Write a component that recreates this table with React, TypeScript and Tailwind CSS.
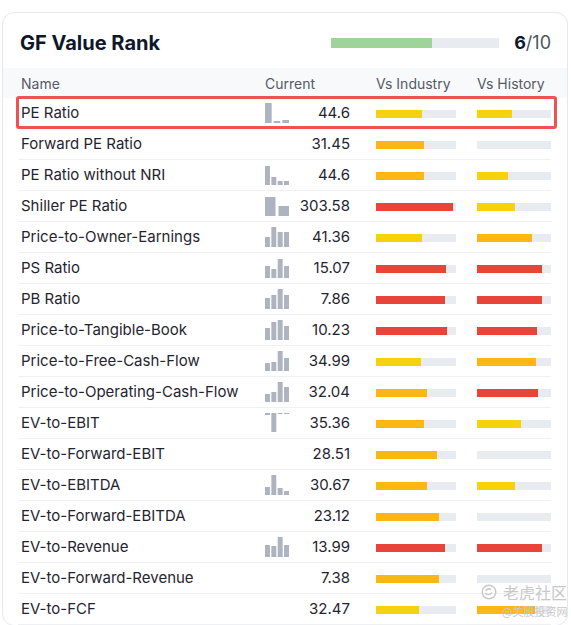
type Tone = "y" | "o" | "r";

interface MetricRow {
  name: string;
  value: string;
  chart: number[] | null;
  ind: [number, Tone];
  hist: [number, Tone];
}

const rows: MetricRow[] = [
  { name: "PE Ratio", value: "44.6", chart: [20, 2, 3], ind: [46, "y"], hist: [35, "y"] },
  { name: "Forward PE Ratio", value: "31.45", chart: null, ind: [48, "o"], hist: [0, "y"] },
  { name: "PE Ratio without NRI", value: "44.6", chart: [19, 8, 4, 4], ind: [48, "o"], hist: [31, "y"] },
  { name: "Shiller PE Ratio", value: "303.58", chart: [19, 10], ind: [77, "r"], hist: [38, "y"] },
  { name: "Price-to-Owner-Earnings", value: "41.36", chart: [10, 20, 15, 15], ind: [46, "y"], hist: [55, "o"] },
  { name: "PS Ratio", value: "15.07", chart: [12, 9, 19, 12], ind: [70, "r"], hist: [65, "r"] },
  { name: "PB Ratio", value: "7.86", chart: [11, 14, 20, 14], ind: [69, "r"], hist: [65, "r"] },
  { name: "Price-to-Tangible-Book", value: "10.23", chart: [12, 18, 20, 14], ind: [71, "r"], hist: [60, "r"] },
  { name: "Price-to-Free-Cash-Flow", value: "34.99", chart: [8, 9, 20, 13], ind: [45, "y"], hist: [59, "o"] },
  { name: "Price-to-Operating-Cash-Flow", value: "32.04", chart: [8, 10, 20, 15], ind: [51, "o"], hist: [61, "r"] },
  { name: "EV-to-EBIT", value: "35.36", chart: [-2, -19, -1, -1], ind: [48, "o"], hist: [44, "y"] },
  { name: "EV-to-Forward-EBIT", value: "28.51", chart: null, ind: [61, "o"], hist: [0, "y"] },
  { name: "EV-to-EBITDA", value: "30.67", chart: [8, 20, 7, 4], ind: [51, "o"], hist: [38, "y"] },
  { name: "EV-to-Forward-EBITDA", value: "23.12", chart: null, ind: [63, "o"], hist: [0, "y"] },
  { name: "EV-to-Revenue", value: "13.99", chart: [12, 11, 20, 12], ind: [69, "r"], hist: [65, "r"] },
  { name: "EV-to-Forward-Revenue", value: "7.38", chart: null, ind: [63, "o"], hist: [0, "y"] },
  { name: "EV-to-FCF", value: "32.47", chart: null, ind: [43, "y"], hist: [58, "o"] },
];

const toneClass: Record<Tone, string> = {
  y: "bg-[#f6d20c]",
  o: "bg-[#fbb714]",
  r: "bg-[#e9443a]",
};

function MiniChart({ data }: { data: number[] }) {
  const n = data.length;
  const gap = n === 4 ? 1.4 : n === 3 ? 2 : 3;
  const w = (24 - gap * (n - 1)) / n;
  return (
    <svg width="24" height="20" viewBox="0 0 24 20" className="shrink-0">
      {data.map((h, i) => {
        const x = i * (w + gap);
        // negative values hang down from the top edge
        return h >= 0 ? (
          <rect key={i} x={x} y={20 - h} width={w} height={h} fill="#adb3bf" />
        ) : (
          <rect key={i} x={x} y={0} width={w} height={-h} fill="#adb3bf" />
        );
      })}
    </svg>
  );
}

function Bar({ fill, tone, width }: { fill: number; tone: Tone; width: number }) {
  return (
    <div className="h-[8px] bg-[#e8ecf1] translate-y-[1px]" style={{ width }}>
      {fill > 0 && <div className={`h-full ${toneClass[tone]}`} style={{ width: fill }} />}
    </div>
  );
}

export default function App() {
  return (
    <div className="relative h-[625px] overflow-hidden bg-white font-[Inter,'Noto_Sans_CJK_SC',sans-serif] pt-[12px] pl-[2px] pr-[3px]">
      <div className="border border-[#e6e8ec] rounded-[12px] bg-white">
        {/* 标题 */}
        <div className="flex items-center pt-[16px] pb-[11px] pl-[17px] pr-[16px]">
          <h2 className="text-[20px] leading-[28px] font-bold text-[#0f172a]">GF Value Rank</h2>
          <div className="ml-auto flex items-center">
            <div className="w-[168px] h-[10px] bg-[#e8ecf0]">
              <div className="h-full w-[101px] bg-[#9ed49a]" />
            </div>
            <span className="ml-[15px] text-[18px] leading-[28px] text-[#4b5563]">
              <span className="font-bold text-[#0f172a]">6</span>/10
            </span>
          </div>
        </div>

        {/* 表头 */}
        <div className="bg-[#f8f9fa] h-[30px] flex items-center pl-[18px] text-[14px] text-[#545b66]">
          <div className="w-[244px]">Name</div>
          <div className="w-[85px]">Current</div>
          <div className="w-[80px] ml-[26px]">Vs Industry</div>
          <div className="w-[74px] ml-[21px]">Vs History</div>
        </div>

        {/* 行 */}
        <div className="relative ml-[15px] mr-[16px]">
          {rows.map((r) => (
            <div
              key={r.name}
              className="h-[31px] flex items-center pl-[3px] border-b border-[#eef0f3] text-[15px] text-[#1f2530]"
            >
              <div className="w-[244px] truncate">{r.name}</div>
              <div className="w-[85px] flex items-center">
                {r.chart && <MiniChart data={r.chart} />}
                <span className="ml-auto">{r.value}</span>
              </div>
              <div className="ml-[26px]">
                <Bar fill={r.ind[0]} tone={r.ind[1]} width={80} />
              </div>
              <div className="ml-[21px]">
                <Bar fill={r.hist[0]} tone={r.hist[1]} width={74} />
              </div>
            </div>
          ))}
          <div className="absolute left-[-2px] top-[-2px] w-[541px] h-[33px] border-[3px] border-[#ef5252] rounded-[3px] pointer-events-none" />
        </div>
      </div>

      {/* 水印 */}
      <div className="absolute left-[481px] top-[583px] text-[#c8c8c8] pointer-events-none select-none">
        <div className="flex items-center gap-[6px]">
          <svg width="16" height="16" viewBox="0 0 16 16" fill="none" stroke="#c8c8c8" strokeWidth="1.4">
            <circle cx="8" cy="8" r="6.8" />
            <path d="M4.5 9.5c1.5 1.5 4.5 1.6 6-.6M5 6.5c1-1.5 3-2 4.5-1" strokeLinecap="round" />
          </svg>
          <span className="text-[16px] leading-[18px] font-['Noto_Sans_CJK_SC',sans-serif]">老虎社区</span>
        </div>
        <div className="ml-[21px] mt-[4px] text-[11px] leading-[12px] font-['Noto_Sans_CJK_SC',sans-serif]">@美股投资网</div>
      </div>
    </div>
  );
}
